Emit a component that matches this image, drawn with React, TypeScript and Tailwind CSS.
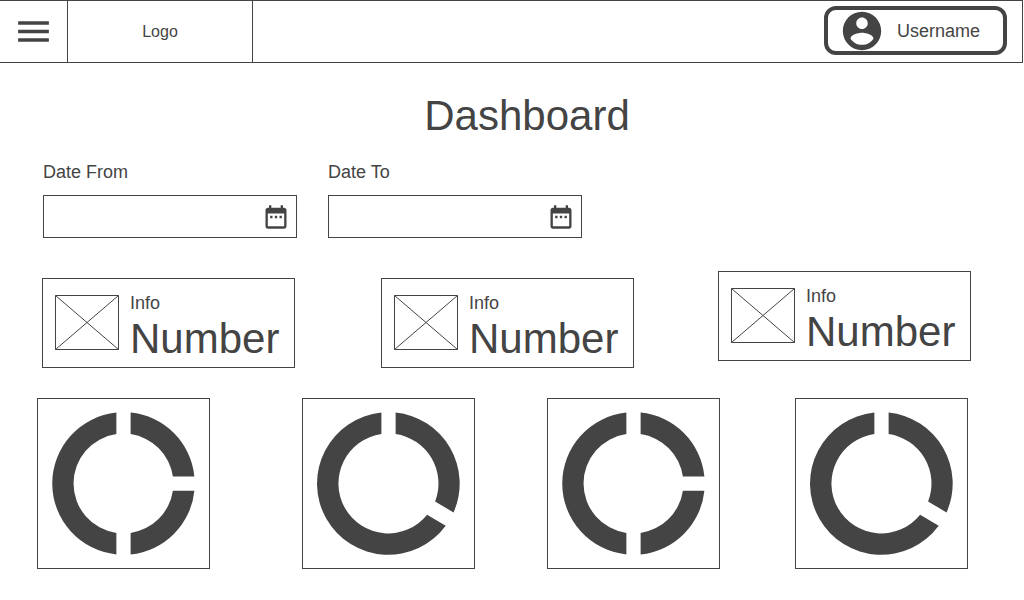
import type { ReactNode } from "react";

const RING_THREE =
  "M11 2.05A10 10 0 0 0 11 21.95V18.93A7 7 0 0 1 11 5.07ZM13 2.05V5.07A7 7 0 0 1 18.93 11H21.95A10 10 0 0 0 13 2.05ZM13 18.93V21.95A10 10 0 0 0 21.95 13H18.93A7 7 0 0 1 13 18.93Z";
const RING_TWO =
  "M13 2.05V5.07A7 7 0 0 1 18.54 14.53L21.13 16.06A10 10 0 0 0 13 2.05ZM11 2.05A10 10 0 1 0 20.03 17.92L17.42 16.4A7 7 0 1 1 11 5.07Z";

const charts = [
  { title: "Chart 1", path: RING_THREE },
  { title: "Chart 2", path: RING_TWO },
  { title: "Chart 3", path: RING_THREE },
  { title: "Chart 4", path: RING_TWO },
];

function Icon({ className, children }: { className: string; children: ReactNode }) {
  return (
    <svg viewBox="0 0 24 24" fill="currentColor" aria-hidden="true" className={className}>
      {children}
    </svg>
  );
}

function Header() {
  return (
    <header className="mr-px flex h-[63px] border-y border-r border-[#444]">
      <button type="button" aria-label="Menu" className="flex w-[68px] items-center justify-center border-r border-[#444]">
        <Icon className="size-[41px]">
          <path d="M3 18h18v-2H3v2zm0-5h18v-2H3v2zm0-7v2h18V6H3z" />
        </Icon>
      </button>
      <a href="#" className="flex w-[185px] items-center justify-center border-r border-[#444] text-base">
        Logo
      </a>
      <button
        type="button"
        className="mt-[5px] mr-[15px] ml-auto flex h-[49px] items-center gap-3 rounded-xl border-4 border-[#444] pr-[23px] pl-[11px] text-lg"
      >
        <Icon className="size-[46px]">
          <path d="M12 2C6.48 2 2 6.48 2 12s4.48 10 10 10 10-4.48 10-10S17.52 2 12 2zm0 3c1.66 0 3 1.34 3 3s-1.34 3-3 3-3-1.34-3-3 1.34-3 3-3zm0 14.2c-2.5 0-4.71-1.28-6-3.22.03-1.99 4-3.08 6-3.08 1.99 0 5.97 1.09 6 3.08-1.29 1.94-3.5 3.22-6 3.22z" />
        </Icon>
        Username
      </button>
    </header>
  );
}

function DateField({ id, label }: { id: string; label: string }) {
  return (
    <div className="flex w-[254px] flex-col gap-[13px]">
      <label htmlFor={id} className="text-lg leading-5">
        {label}
      </label>
      <div className="flex h-[43px] items-center border border-[#444] pr-1.5">
        <input id={id} type="text" className="h-full min-w-0 flex-1 px-3 text-lg outline-none" />
        <button type="button" aria-label={`Open calendar for ${label}`}>
          <Icon className="size-7">
            <path d="M9 11H7v2h2v-2zm4 0h-2v2h2v-2zm4 0h-2v2h2v-2zm2-7h-1V2h-2v2H8V2H6v2H5c-1.11 0-1.99.9-1.99 2L3 20c0 1.1.89 2 2 2h14c1.1 0 2-.9 2-2V6c0-1.1-.9-2-2-2zm0 16H5V9h14v11z" />
          </Icon>
        </button>
      </div>
    </div>
  );
}

function InfoCard() {
  return (
    <article className="flex h-[90px] w-[253px] gap-[11px] border border-[#444] pl-3">
      <svg
        viewBox="0 0 64 55"
        fill="none"
        stroke="currentColor"
        aria-hidden="true"
        className="mt-4 h-[55px] w-16 shrink-0"
      >
        <path d="M.5 .5h63v54H.5zM.5 .5l63 54M63.5 .5l-63 54" />
      </svg>
      <div className="pt-3">
        <p className="text-lg leading-6">Info</p>
        <p className="text-[42px] leading-[48px]">Number</p>
      </div>
    </article>
  );
}

export default function App() {
  return (
    <div className="min-h-screen bg-white font-['Liberation_Sans',Arial,sans-serif] text-[#444]">
      <Header />
      <main className="pb-8">
        <h1 className="mt-[29px] pl-[30px] text-center text-[42px] leading-[48px]">Dashboard</h1>
        <form className="mt-[22px] flex flex-wrap gap-[31px] pl-[43px]">
          <DateField id="date-from" label="Date From" />
          <DateField id="date-to" label="Date To" />
        </form>
        <section aria-label="Summary" className="mt-[33px] grid grid-cols-[339fr_337fr_253fr] pr-[53px] pl-[42px]">
          <div className="pt-[7px]">
            <InfoCard />
          </div>
          <div className="pt-[7px]">
            <InfoCard />
          </div>
          <InfoCard />
        </section>
        <section aria-label="Charts" className="mt-[30px] grid grid-cols-[265fr_245fr_248fr_173fr] pr-14 pl-[37px]">
          {charts.map((chart) => (
            <div key={chart.title} className="flex h-[171px] w-[173px] items-center justify-center border border-[#444]">
              <svg viewBox="0 0 24 24" fill="currentColor" role="img" aria-label={chart.title} className="size-[171px] shrink-0">
                <path d={chart.path} />
              </svg>
            </div>
          ))}
        </section>
      </main>
    </div>
  );
}
